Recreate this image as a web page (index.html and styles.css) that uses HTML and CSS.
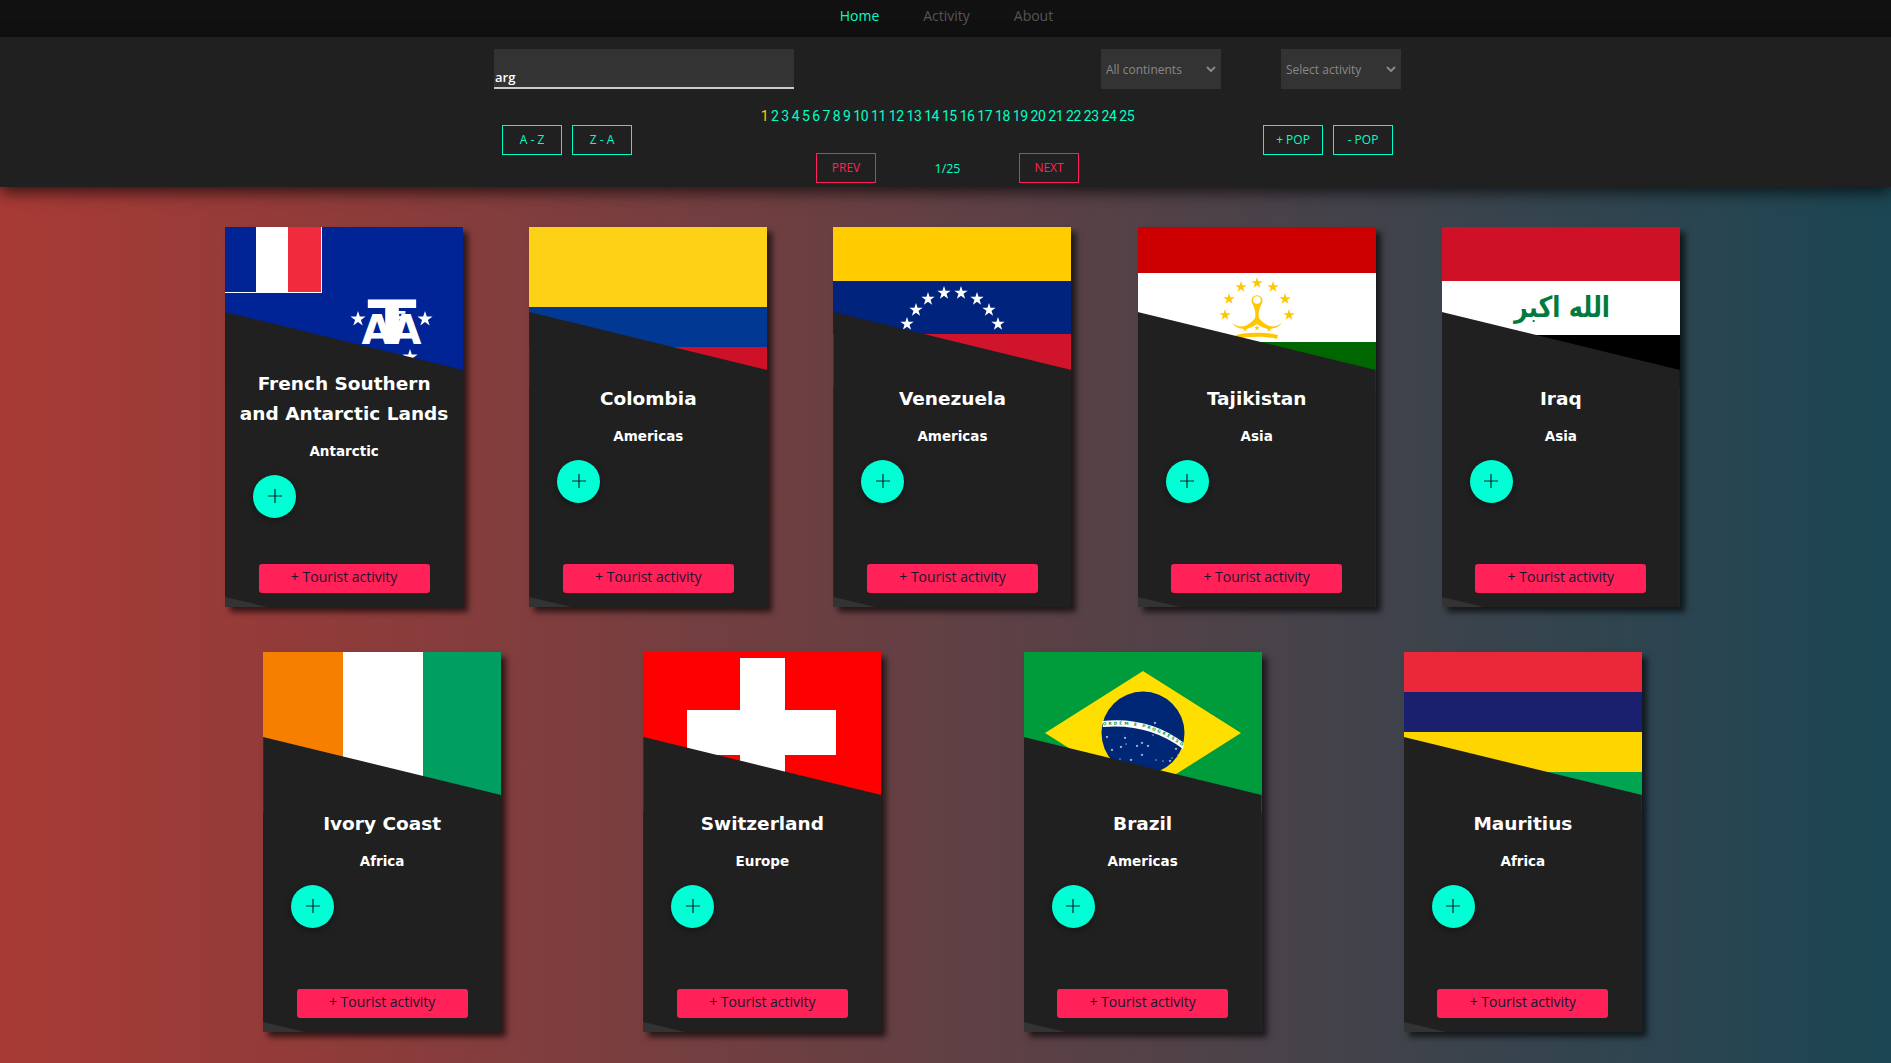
FILE: index.html
```html
<!DOCTYPE html>
<html lang="en">
    <head>
        <meta charset="UTF-8" />
        <meta name="viewport" content="width=device-width, initial-scale=1.0" />
        <title>Countries</title>

        <link rel="stylesheet" href="styles.css">
    </head>

    <body>
        <svg class="defs" width="0" height="0">
            <defs>
                <polygon id="star" points="0,-1 0.225,-0.309 0.951,-0.309 0.363,0.118 0.588,0.809 0,0.382 -0.588,0.809 -0.363,0.118 -0.951,-0.309 -0.225,-0.309" />
                <symbol id="plus" viewBox="0 0 14 14">
                    <path d="M7 0V14M0 7H14" stroke="#123" stroke-width="1.2" fill="none" />
                </symbol>
                <symbol id="chevron" viewBox="0 0 10 6">
                    <path d="M1 1L5 5L9 1" stroke="#888" stroke-width="2" fill="none" />
                </symbol>
            </defs>
        </svg>

        <nav>
            <a class="active" href="#">Home</a>
            <a href="#">Activity</a>
            <a href="#">About</a>
        </nav>

        <header>
            <div class="filters">
                <input class="search" type="text" value="arg" />
                <div class="selects">
                    <div class="select-box">
                        <select><option>All continents</option></select>
                        <svg width="10" height="6"><use href="#chevron" /></svg>
                    </div>
                    <div class="select-box">
                        <select><option>Select activity</option></select>
                        <svg width="10" height="6"><use href="#chevron" /></svg>
                    </div>
                </div>
            </div>

            <div class="controls">
                <div class="sort">
                    <button>A - Z</button>
                    <button>Z - A</button>
                </div>

                <div class="pagination">
                    <div class="pages">
                        <a class="current" href="#">1</a>
                        <a href="#">2</a>
                        <a href="#">3</a>
                        <a href="#">4</a>
                        <a href="#">5</a>
                        <a href="#">6</a>
                        <a href="#">7</a>
                        <a href="#">8</a>
                        <a href="#">9</a>
                        <a href="#">10</a>
                        <a href="#">11</a>
                        <a href="#">12</a>
                        <a href="#">13</a>
                        <a href="#">14</a>
                        <a href="#">15</a>
                        <a href="#">16</a>
                        <a href="#">17</a>
                        <a href="#">18</a>
                        <a href="#">19</a>
                        <a href="#">20</a>
                        <a href="#">21</a>
                        <a href="#">22</a>
                        <a href="#">23</a>
                        <a href="#">24</a>
                        <a href="#">25</a>
                    </div>
                    <div class="pager">
                        <button class="red">PREV</button>
                        <span>1/25</span>
                        <button class="red">NEXT</button>
                    </div>
                </div>

                <div class="sort">
                    <button>+ POP</button>
                    <button>- POP</button>
                </div>
            </div>
        </header>

        <main class="cards">
            <div class="card">
                <svg class="flag" viewBox="0 0 238 160">
                    <rect width="238" height="160" fill="#002395" />
                    <rect x="0" y="0" width="97" height="66" fill="#fff" />
                    <rect x="0" y="0" width="31" height="65" fill="#002395" />
                    <rect x="63" y="0" width="33" height="65" fill="#ef2b3d" />
                    <g fill="#fff">
                        <use href="#star" transform="translate(133 92) scale(8)" />
                        <use href="#star" transform="translate(200 92) scale(8)" />
                        <use href="#star" transform="translate(185 130) scale(8)" />
                        <text class="monogram" x="167" y="117" font-size="60" textLength="49" lengthAdjust="spacingAndGlyphs">T</text>
                        <text class="monogram" x="152" y="117" font-size="40">A</text>
                        <text class="monogram" x="181" y="117" font-size="40">A</text>
                        <text class="monogram" x="175" y="98" font-size="20">F</text>
                    </g>
                </svg>
                <div class="card-body">
                    <div class="info">
                        <h2>French Southern and Antarctic Lands</h2>
                        <h3>Antarctic</h3>
                        <span class="add"><svg width="14" height="14"><use href="#plus" /></svg></span>
                    </div>
                    <button class="tourist">+ Tourist activity</button>
                </div>
            </div>

            <div class="card">
                <svg class="flag" viewBox="0 0 238 160">
                    <rect width="238" height="80" fill="#fcd116" />
                    <rect y="80" width="238" height="40" fill="#003893" />
                    <rect y="120" width="238" height="40" fill="#ce1126" />
                </svg>
                <div class="card-body">
                    <div class="info">
                        <h2>Colombia</h2>
                        <h3>Americas</h3>
                        <span class="add"><svg width="14" height="14"><use href="#plus" /></svg></span>
                    </div>
                    <button class="tourist">+ Tourist activity</button>
                </div>
            </div>

            <div class="card">
                <svg class="flag" viewBox="0 0 238 160">
                    <rect width="238" height="54" fill="#ffcc00" />
                    <rect y="54" width="238" height="53" fill="#00247d" />
                    <rect y="107" width="238" height="53" fill="#cf142b" />
                    <g fill="#fff">
                        <use href="#star" transform="translate(74 97) scale(7)" />
                        <use href="#star" transform="translate(83 83) scale(7)" />
                        <use href="#star" transform="translate(95 72) scale(7)" />
                        <use href="#star" transform="translate(111 66) scale(7)" />
                        <use href="#star" transform="translate(128 66) scale(7)" />
                        <use href="#star" transform="translate(144 72) scale(7)" />
                        <use href="#star" transform="translate(156 83) scale(7)" />
                        <use href="#star" transform="translate(165 97) scale(7)" />
                    </g>
                </svg>
                <div class="card-body">
                    <div class="info">
                        <h2>Venezuela</h2>
                        <h3>Americas</h3>
                        <span class="add"><svg width="14" height="14"><use href="#plus" /></svg></span>
                    </div>
                    <button class="tourist">+ Tourist activity</button>
                </div>
            </div>

            <div class="card">
                <svg class="flag" viewBox="0 0 238 160">
                    <rect width="238" height="46" fill="#cc0000" />
                    <rect y="46" width="238" height="69" fill="#fff" />
                    <rect y="115" width="238" height="45" fill="#006600" />
                    <g fill="#ffc700">
                        <use href="#star" transform="translate(119 56) scale(6)" />
                        <use href="#star" transform="translate(103 60) scale(6)" />
                        <use href="#star" transform="translate(135 60) scale(6)" />
                        <use href="#star" transform="translate(91 72) scale(6)" />
                        <use href="#star" transform="translate(147 72) scale(6)" />
                        <use href="#star" transform="translate(87 88) scale(6)" />
                        <use href="#star" transform="translate(151 88) scale(6)" />
                        <use href="#star" transform="translate(107 102) scale(3)" />
                        <use href="#star" transform="translate(119 101) scale(3)" />
                        <use href="#star" transform="translate(131 102) scale(3)" />
                        <path d="M94 96C102 102 110 100 117 91C118 87 117 81 114 76A5.5 5.5 0 1 1 124 76C121 81 120 87 121 91C128 100 136 102 144 96C139 103 127 104 119 97C111 104 99 103 94 96Z" />
                        <path d="M98 108C110 105 128 105 140 108L139 112C128 109 110 109 99 112Z" />
                    </g>
                    <circle cx="119" cy="73" r="3.8" fill="#fff" />
                </svg>
                <div class="card-body">
                    <div class="info">
                        <h2>Tajikistan</h2>
                        <h3>Asia</h3>
                        <span class="add"><svg width="14" height="14"><use href="#plus" /></svg></span>
                    </div>
                    <button class="tourist">+ Tourist activity</button>
                </div>
            </div>

            <div class="card">
                <svg class="flag" viewBox="0 0 238 160">
                    <rect width="238" height="54" fill="#ce1126" />
                    <rect y="54" width="238" height="54" fill="#fff" />
                    <rect y="108" width="238" height="52" fill="#000" />
                    <text class="takbir" x="120" y="90" font-size="29" textLength="96" lengthAdjust="spacingAndGlyphs">الله اكبر</text>
                </svg>
                <div class="card-body">
                    <div class="info">
                        <h2>Iraq</h2>
                        <h3>Asia</h3>
                        <span class="add"><svg width="14" height="14"><use href="#plus" /></svg></span>
                    </div>
                    <button class="tourist">+ Tourist activity</button>
                </div>
            </div>

            <div class="card">
                <svg class="flag" viewBox="0 0 238 160">
                    <rect width="80" height="160" fill="#f77f00" />
                    <rect x="80" width="80" height="160" fill="#fff" />
                    <rect x="160" width="78" height="160" fill="#009e60" />
                </svg>
                <div class="card-body">
                    <div class="info">
                        <h2>Ivory Coast</h2>
                        <h3>Africa</h3>
                        <span class="add"><svg width="14" height="14"><use href="#plus" /></svg></span>
                    </div>
                    <button class="tourist">+ Tourist activity</button>
                </div>
            </div>

            <div class="card">
                <svg class="flag" viewBox="0 0 238 160">
                    <rect width="238" height="160" fill="#ff0000" />
                    <rect x="97" y="6" width="45" height="148" fill="#fff" />
                    <rect x="44" y="58" width="149" height="45" fill="#fff" />
                </svg>
                <div class="card-body">
                    <div class="info">
                        <h2>Switzerland</h2>
                        <h3>Europe</h3>
                        <span class="add"><svg width="14" height="14"><use href="#plus" /></svg></span>
                    </div>
                    <button class="tourist">+ Tourist activity</button>
                </div>
            </div>

            <div class="card">
                <svg class="flag" viewBox="0 0 238 160">
                    <rect width="238" height="160" fill="#009b3a" />
                    <polygon points="119,19 217,81 119,143 21,81" fill="#fedf00" />
                    <circle cx="119" cy="81" r="41.5" fill="#002776" />
                    <path d="M78 69Q125 64 160 91L159 97Q125 71 79 75Z" fill="#fff" />
                    <path id="banner" d="M79 73.5Q125 68 159 95" fill="none" />
                    <text class="motto" font-size="4.2"><textPath href="#banner" textLength="84">ORDEM E PROGRESSO</textPath></text>
                    <g fill="#fff">
                        <use href="#star" transform="translate(83 85) scale(1.5)" />
                        <use href="#star" transform="translate(131 71) scale(1.5)" />
                        <use href="#star" transform="translate(129 83) scale(1)" />
                        <use href="#star" transform="translate(101 86) scale(1.5)" />
                        <use href="#star" transform="translate(88 98) scale(1.5)" />
                        <use href="#star" transform="translate(97 95) scale(1.5)" />
                        <use href="#star" transform="translate(102 92) scale(1)" />
                        <use href="#star" transform="translate(96 107) scale(1)" />
                        <use href="#star" transform="translate(107 108) scale(1.5)" />
                        <use href="#star" transform="translate(113 94) scale(1.5)" />
                        <use href="#star" transform="translate(118 91) scale(1.5)" />
                        <use href="#star" transform="translate(124 94) scale(1.5)" />
                        <use href="#star" transform="translate(118 103) scale(1.5)" />
                        <use href="#star" transform="translate(132 108) scale(1)" />
                        <use href="#star" transform="translate(139 109) scale(1)" />
                        <use href="#star" transform="translate(146 109) scale(1.5)" />
                        <use href="#star" transform="translate(152 97) scale(1.5)" />
                        <use href="#star" transform="translate(154 103) scale(1)" />
                        <use href="#star" transform="translate(148 106) scale(1)" />
                    </g>
                </svg>
                <div class="card-body">
                    <div class="info">
                        <h2>Brazil</h2>
                        <h3>Americas</h3>
                        <span class="add"><svg width="14" height="14"><use href="#plus" /></svg></span>
                    </div>
                    <button class="tourist">+ Tourist activity</button>
                </div>
            </div>

            <div class="card">
                <svg class="flag" viewBox="0 0 238 160">
                    <rect width="238" height="40" fill="#ea2839" />
                    <rect y="40" width="238" height="40" fill="#1a206d" />
                    <rect y="80" width="238" height="40" fill="#ffd500" />
                    <rect y="120" width="238" height="40" fill="#00a551" />
                </svg>
                <div class="card-body">
                    <div class="info">
                        <h2>Mauritius</h2>
                        <h3>Africa</h3>
                        <span class="add"><svg width="14" height="14"><use href="#plus" /></svg></span>
                    </div>
                    <button class="tourist">+ Tourist activity</button>
                </div>
            </div>
        </main>
    </body>
</html>
```

FILE: styles.css
```css
* {
    margin: 0;
    padding: 0;
    box-sizing: border-box;
}

body {
    min-height: 100vh;
    background: linear-gradient(90deg, #a83a35, #1b4653);
    font-family: "Open Sans", sans-serif;
    overflow-x: hidden;
}

.defs {
    display: block;
    height: 0;
}

nav {
    display: flex;
    justify-content: center;
    height: 37px;
    padding-left: 2px;
    background-color: #111;
}

nav a {
    width: 87px;
    line-height: 32px;
    text-align: center;
    font-size: 14px;
    color: #555;
    text-decoration: none;
}

nav a.active {
    color: #00ffc8;
}

header {
    position: relative;
    height: 150px;
    padding: 12px 0 0 4px;
    background-color: #202020;
    box-shadow: 0 5px 15px rgba(0, 0, 0, 0.7);
}

.filters {
    display: flex;
    justify-content: space-between;
    width: 907px;
    margin: 0 auto;
}

.search {
    width: 300px;
    height: 40px;
    padding: 18px 1px 0;
    background-color: #333;
    border: none;
    border-bottom: 2px solid #ccc;
    color: #fff;
    font-family: inherit;
    font-size: 13px;
    font-weight: 600;
    outline: none;
}

.selects {
    display: flex;
    gap: 60px;
}

.select-box {
    position: relative;
}

.select-box svg {
    position: absolute;
    top: 17px;
    right: 5px;
    pointer-events: none;
}

select {
    display: block;
    width: 120px;
    height: 40px;
    padding-left: 5px;
    background-color: #333;
    border: none;
    color: #888;
    font-family: inherit;
    font-size: 12px;
    appearance: none;
}

.controls {
    display: flex;
    justify-content: space-between;
    width: 891px;
    margin: 0 auto;
}

.sort {
    display: flex;
    gap: 10px;
    margin-top: 36px;
}

button {
    width: 60px;
    height: 30px;
    padding-bottom: 2px;
    background: none;
    border: 1px solid #00ffc8;
    color: #00ffc8;
    font-family: inherit;
    font-size: 12px;
    font-weight: 500;
    cursor: pointer;
}

button.red {
    border-color: #ff2157;
    color: #ff2157;
}

.pagination {
    display: flex;
    flex-direction: column;
    align-items: center;
    padding-top: 18px;
}

.pages {
    display: flex;
    gap: 2.8px;
    height: 46px;
    font-family: Roboto, sans-serif;
    font-size: 14px;
    letter-spacing: -0.4px;
    line-height: 18px;
}

.pages a {
    color: #00ffc8;
    text-decoration: none;
}

.pages a.current {
    color: #ffc800;
}

.pager {
    display: flex;
    justify-content: space-between;
    align-items: center;
    width: 263px;
    color: #00ffc8;
    font-size: 12.5px;
}

.cards {
    display: flex;
    flex-wrap: wrap;
    justify-content: space-around;
    row-gap: 45px;
    width: 1521px;
    margin: 40px 0 0 192px;
}

.card {
    position: relative;
    width: 238px;
    height: 380px;
    margin: 0 33px;
    background-color: #333;
    box-shadow: 5px 5px 6px rgba(0, 0, 0, 0.65);
}

.flag {
    display: block;
    width: 238px;
    height: 160px;
}

.card-body {
    position: absolute;
    top: 0;
    left: 0;
    display: flex;
    flex-direction: column;
    align-items: center;
    width: 100%;
    height: 100%;
    padding-top: 143px;
    background-color: #202020;
    clip-path: polygon(0 85px, 100% 143px, 100% 100%, 42px 100%, 0 370px);
    color: #fff;
}

.info {
    display: flex;
    flex-direction: column;
    justify-content: center;
    width: 100%;
    height: 146px;
    text-align: center;
}

h2 {
    padding: 1px 11px 0;
    font-family: "DejaVu Sans", sans-serif;
    font-size: 18.5px;
    font-weight: 600;
    line-height: 30px;
}

h3 {
    margin-top: 13.4px;
    font-family: "DejaVu Sans", sans-serif;
    font-size: 13.5px;
    font-weight: 600;
    line-height: 16px;
}

.add {
    display: flex;
    flex: none;
    align-items: center;
    justify-content: center;
    width: 43px;
    height: 43px;
    margin: 16px 0 0 28px;
    background-color: #00ffd5;
    border-radius: 50%;
    box-shadow: 0 2px 6px rgba(0, 0, 0, 0.4);
}

.tourist {
    width: 171px;
    height: 29px;
    margin-top: 48px;
    padding-bottom: 4px;
    background-color: #ff2157;
    border: none;
    border-radius: 3px;
    color: #1c1530;
    font-size: 14px;
}

.monogram {
    font-family: "DejaVu Sans", sans-serif;
    font-weight: 700;
    text-anchor: middle;
}

.takbir {
    fill: #007a3d;
    font-family: "DejaVu Sans", sans-serif;
    font-weight: 700;
    text-anchor: middle;
}

.motto {
    fill: #009b3a;
    font-family: "DejaVu Sans", sans-serif;
    font-weight: 700;
}
```
